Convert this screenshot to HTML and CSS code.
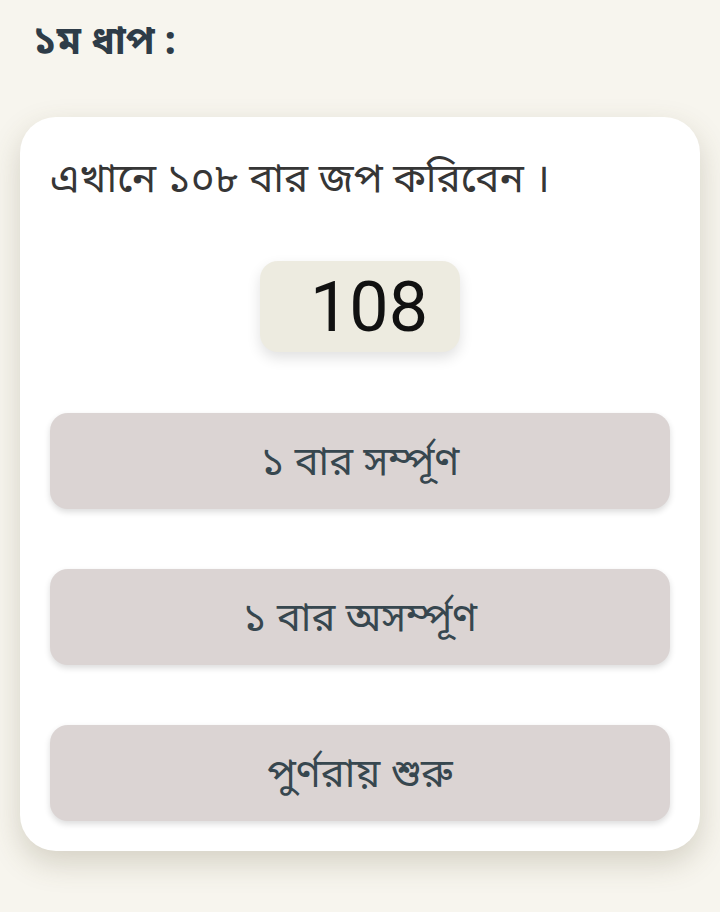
FILE: index.html
```html
<!DOCTYPE html>
<html lang="bn">
<head>
<meta charset="utf-8">
<link rel="stylesheet" href="styles.css">
</head>
<body>
<div class="page">
  <h1 class="step">১ম ধাপ :</h1>
  <div class="card">
    <p class="note">এখানে ১০৮ বার জপ করিবেন ।</p>
    <div class="counter-wrap"><div class="counter">108</div></div>
    <div class="actions">
      <button class="btn">১ বার সর্ম্পূণ</button>
      <button class="btn">১ বার অসর্ম্পূণ</button>
      <button class="btn">পুর্ণরায় শুরু</button>
    </div>
  </div>
</div>
</body>
</html>
```
FILE: styles.css
```css
html, body {
  margin: 0;
  padding: 0;
  background: #f7f5ee;
  font-family: "Noto Sans Bengali", "Noto Serif Bengali", "Lohit Bengali", "Noto Sans", sans-serif;
}
.page {
  width: 720px;
  height: 912px;
  box-sizing: border-box;
  padding: 18px 20px 0 20px;
}
.step {
  margin: 0 0 0 13px;
  font-size: 39px;
  font-weight: 700;
  color: #2e3c48;
  line-height: 52px;
  height: 52px;
}
.card {
  margin-top: 47px;
  background: #ffffff;
  border-radius: 36px;
  padding: 36px 30px 30px 30px;
  box-shadow: 0 12px 30px rgba(90, 80, 50, 0.22);
}
.note {
  margin: 0;
  font-size: 40.5px;
  line-height: 58px;
  color: #363636;
}
.counter-wrap {
  display: flex;
  justify-content: center;
  margin-top: 50px;
}
.counter {
  width: 200px;
  height: 91px;
  box-sizing: border-box;
  background: #edebe0;
  border-radius: 18px;
  box-shadow: 0 6px 14px rgba(0, 0, 0, 0.12);
  font-family: Roboto, "Liberation Sans", sans-serif;
  font-size: 70px;
  color: #111;
  display: flex;
  align-items: center;
  justify-content: center;
  padding-left: 18px;
}
.actions {
  display: flex;
  flex-direction: column;
  gap: 60px;
  margin-top: 61px;
}
.btn {
  height: 96px;
  width: 100%;
  border: none;
  border-radius: 18px;
  background: #dbd4d3;
  color: #37474f;
  font-family: "Noto Sans Bengali", "Noto Serif Bengali", "Lohit Bengali", "Noto Sans", sans-serif;
  font-size: 40px;
  box-shadow: 0 3px 6px rgba(0, 0, 0, 0.14);
  padding: 7px 0 0 0;
}
```
